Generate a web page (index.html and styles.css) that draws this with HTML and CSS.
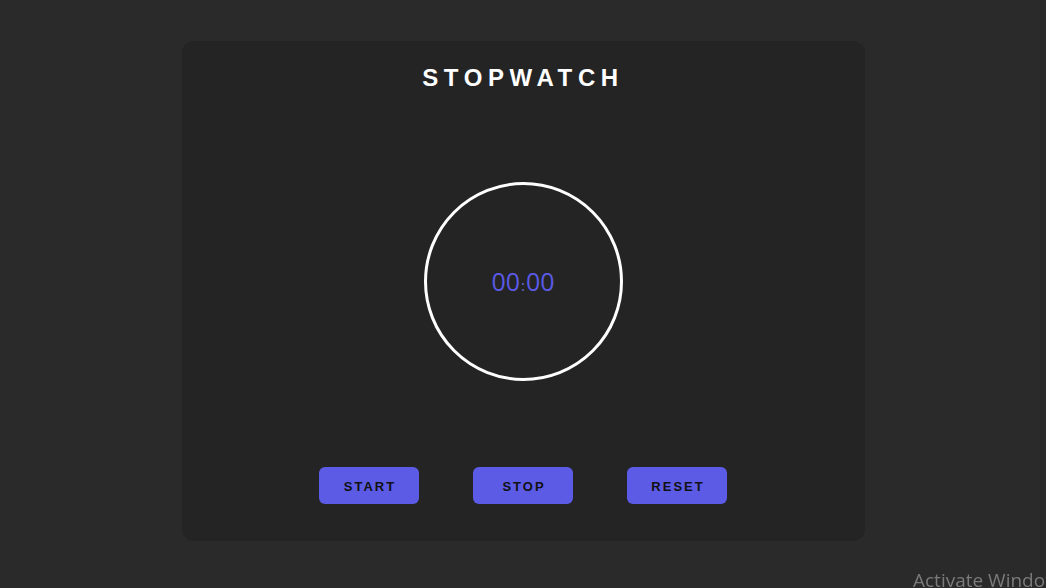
FILE: index.html
```html
<!DOCTYPE html>
<html lang="en">
<head>
<meta charset="utf-8">
<title>Stopwatch</title>
<link rel="stylesheet" href="styles.css">
</head>
<body>
<main class="card">
  <h1 class="title">STOPWATCH</h1>
  <div class="dial">
    <div class="time"><span class="digits">00</span><span class="colon">:</span><span class="digits">00</span></div>
  </div>
  <div class="controls">
    <button class="btn">START</button>
    <button class="btn">STOP</button>
    <button class="btn">RESET</button>
  </div>
</main>
<div class="watermark">Activate Windows</div>
</body>
</html>
```
FILE: styles.css
```css
html, body {
  margin: 0;
  padding: 0;
}
body {
  background: #2a2a2a;
  font-family: "Liberation Sans", Arial, sans-serif;
  height: 588px;
  overflow: hidden;
}
.card {
  box-sizing: border-box;
  width: 683px;
  height: 500px;
  margin: 41px auto 0;
  background: #242424;
  border-radius: 12px;
  padding: 23px 0 37px;
  display: flex;
  flex-direction: column;
  align-items: center;
}
.title {
  margin: 0;
  color: #ffffff;
  font-size: 24px;
  line-height: 28px;
  font-weight: bold;
  letter-spacing: 5.6px;
}
.dial {
  box-sizing: border-box;
  width: 199px;
  height: 199px;
  margin-top: 90px;
  border: 3px solid #ffffff;
  border-radius: 50%;
  display: flex;
  align-items: center;
  justify-content: center;
}
.time {
  color: #5a5ae6;
  font-family: "Open Sans", "Noto Sans", sans-serif;
  line-height: 30px;
  display: flex;
  align-items: baseline;
  padding-top: 2px;
}
.digits {
  font-size: 25px;
}
.colon {
  font-size: 15px;
  padding: 0 1px;
  color: #6a6ad8;
}
.controls {
  margin-top: auto;
  display: flex;
  gap: 54px;
}
.btn {
  width: 100px;
  height: 37px;
  border: none;
  border-radius: 6px;
  background: #5b5be6;
  color: #111111;
  font-family: "Liberation Sans", Arial, sans-serif;
  font-weight: bold;
  font-size: 13px;
  letter-spacing: 2px;
  padding: 2px 0 0 2px;
  cursor: pointer;
}
.watermark {
  position: fixed;
  left: 913px;
  top: 570px;
  white-space: nowrap;
  font-family: "Open Sans", "Noto Sans", sans-serif;
  font-size: 19px;
  line-height: 20px;
  color: #7a7a7a;
}
```
